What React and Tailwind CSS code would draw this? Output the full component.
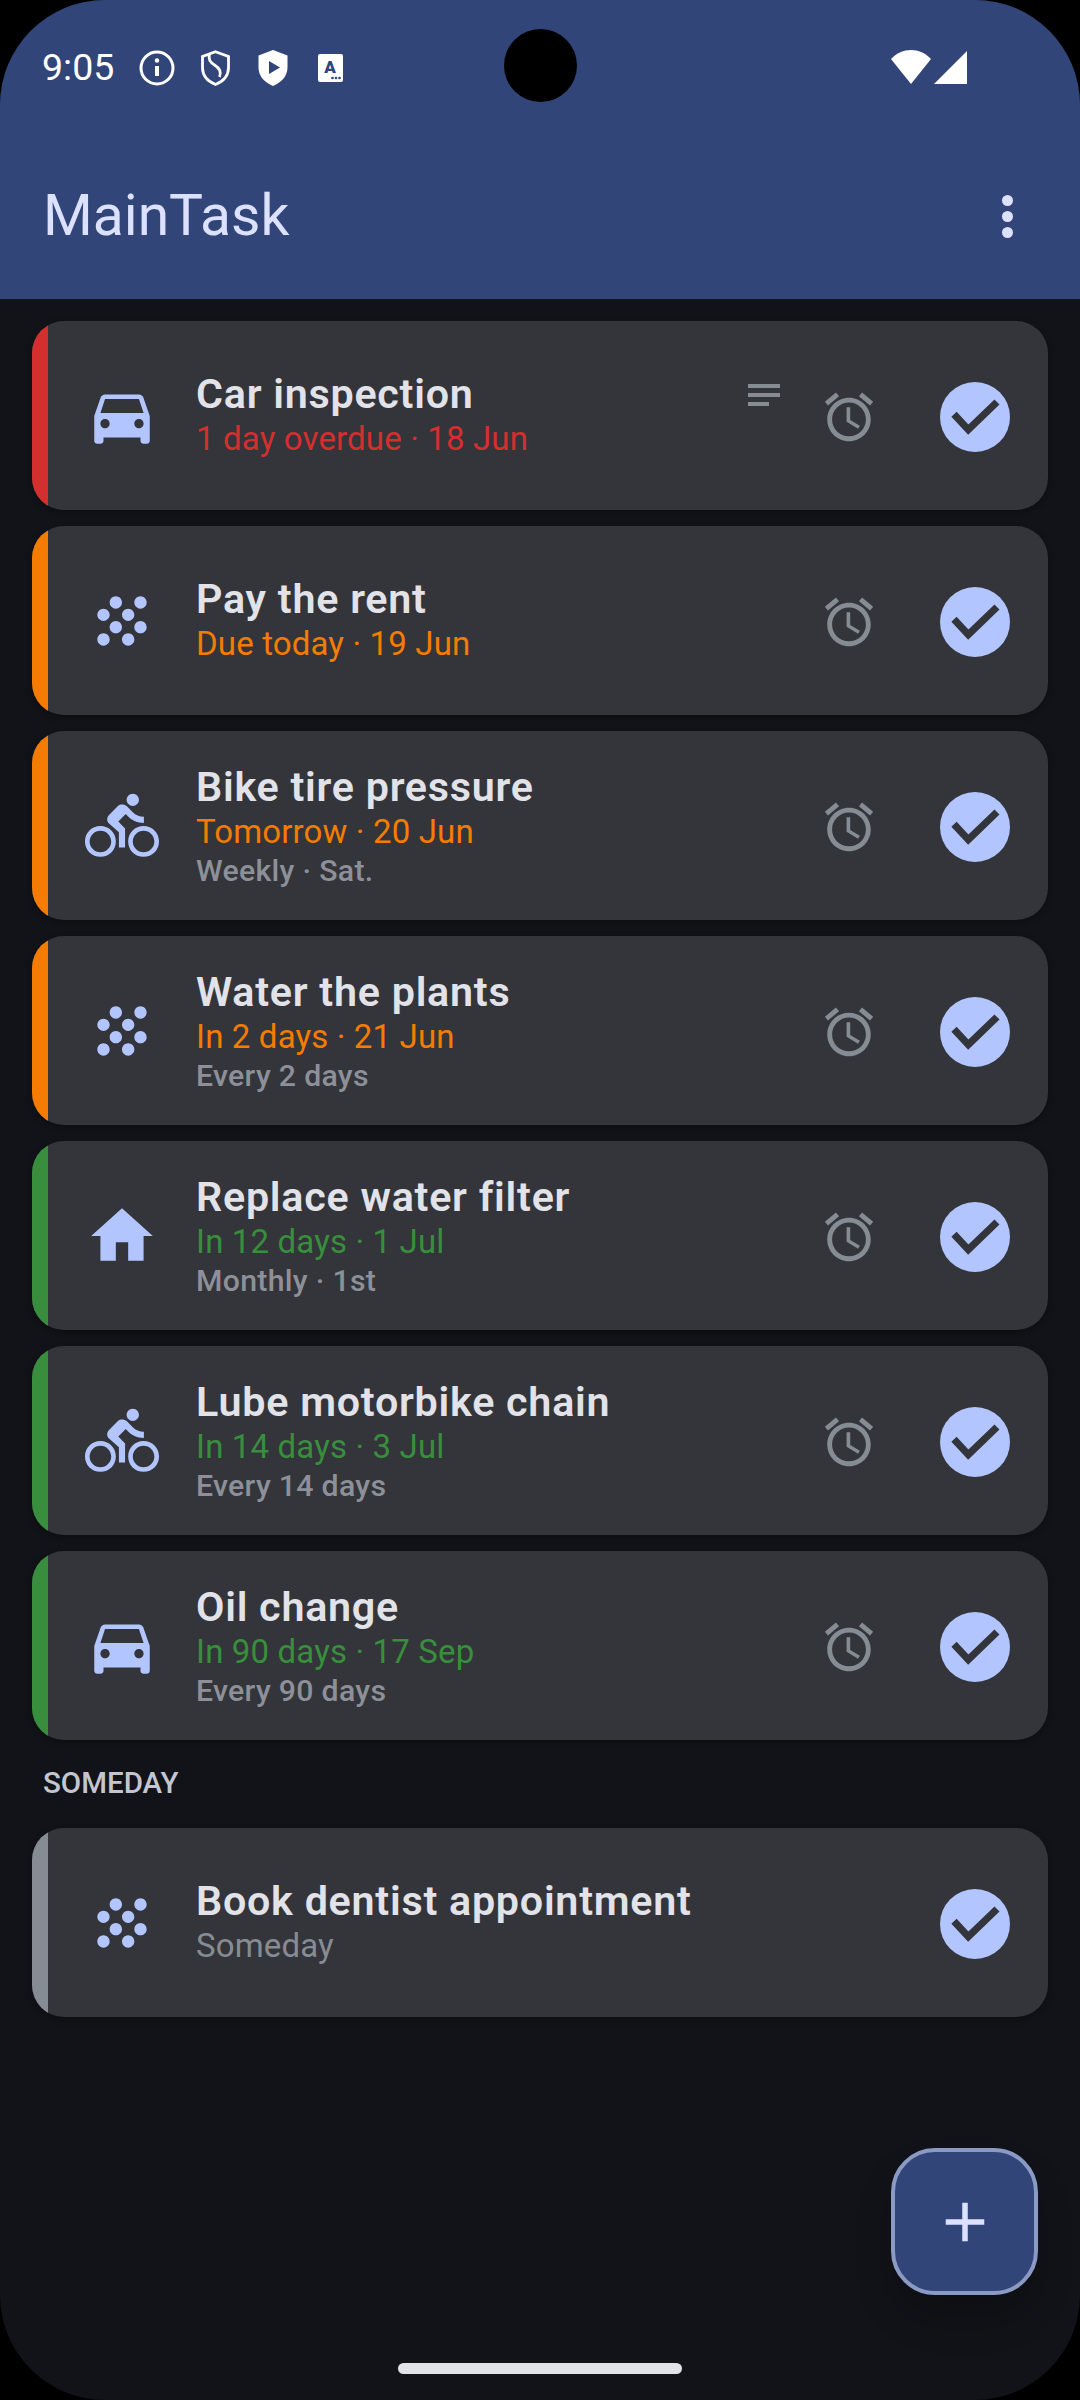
import React from "react";

// material icon paths
const ICONS = {
  car: "M18.92 6.01C18.72 5.42 18.16 5 17.5 5h-11c-.66 0-1.21.42-1.42 1.01L3 12v8c0 .55.45 1 1 1h1c.55 0 1-.45 1-1v-1h12v1c0 .55.45 1 1 1h1c.55 0 1-.45 1-1v-8l-2.08-5.99zM6.5 16c-.83 0-1.5-.67-1.5-1.5S5.67 13 6.5 13s1.5.67 1.5 1.5S7.33 16 6.5 16zm11 0c-.83 0-1.5-.67-1.5-1.5s.67-1.5 1.5-1.5 1.5.67 1.5 1.5-.67 1.5-1.5 1.5zM5 11l1.5-4.5h11L19 11H5z",
  grain: "M10 12c-1.1 0-2 .9-2 2s.9 2 2 2 2-.9 2-2-.9-2-2-2zM6 8c-1.1 0-2 .9-2 2s.9 2 2 2 2-.9 2-2-.9-2-2-2zm0 8c-1.1 0-2 .9-2 2s.9 2 2 2 2-.9 2-2-.9-2-2-2zm12-8c1.1 0 2-.9 2-2s-.9-2-2-2-2 .9-2 2 .9 2 2 2zm-4 8c-1.1 0-2 .9-2 2s.9 2 2 2 2-.9 2-2-.9-2-2-2zm4-4c-1.1 0-2 .9-2 2s.9 2 2 2 2-.9 2-2-.9-2-2-2zm-4-4c-1.1 0-2 .9-2 2s.9 2 2 2 2-.9 2-2-.9-2-2-2zm-4-4c-1.1 0-2 .9-2 2s.9 2 2 2 2-.9 2-2-.9-2-2-2z",
  bike: "M15.5 5.5c1.1 0 2-.9 2-2s-.9-2-2-2-2 .9-2 2 .9 2 2 2zM5 12c-2.8 0-5 2.2-5 5s2.2 5 5 5 5-2.2 5-5-2.2-5-5-5zm0 8.5c-1.9 0-3.5-1.6-3.5-3.5s1.6-3.5 3.5-3.5 3.5 1.6 3.5 3.5-1.6 3.5-3.5 3.5zm5.8-10l2.4-2.4.8.8c1.3 1.3 3 2.1 5.1 2.1V9c-1.5 0-2.7-.6-3.6-1.5l-1.9-1.9c-.5-.4-1-.6-1.6-.6s-1.1.2-1.4.6L7.8 8.4c-.4.4-.6.9-.6 1.4 0 .6.2 1.1.6 1.4L11 14v5h2v-6.2l-2.2-2.3zM19 12c-2.8 0-5 2.2-5 5s2.2 5 5 5 5-2.2 5-5-2.2-5-5-5zm0 8.5c-1.9 0-3.5-1.6-3.5-3.5s1.6-3.5 3.5-3.5 3.5 1.6 3.5 3.5-1.6 3.5-3.5 3.5z",
  home: "M10 20v-6h4v6h5v-8h3L12 3 2 12h3v8z",
  alarm: "M22 5.72l-4.6-3.86-1.29 1.53 4.6 3.86L22 5.72zM7.88 3.39L6.6 1.86 2 5.71l1.29 1.53 4.59-3.85zM12.5 8H11v6l4.75 2.85.75-1.23-4-2.37V8zM12 4c-4.97 0-9 4.03-9 9s4.03 9 9 9 9-4.03 9-9-4.03-9-9-9zm0 16c-3.87 0-7-3.13-7-7s3.13-7 7-7 7 3.13 7 7-3.13 7-7 7z",
  add: "M19 13h-6v6h-2v-6H5v-2h6V5h2v6h6v2z",
};

function Icon({ name, className }) {
  return (
    <svg viewBox="0 0 24 24" fill="currentColor" className={className}>
      <path d={ICONS[name]} />
    </svg>
  );
}

const tasks = [
  { title: "Car inspection", due: "1 day overdue · 18 Jun", icon: "car", stripe: "bg-[#d32f2f]", tone: "text-[#d32f2f]", notes: true },
  { title: "Pay the rent", due: "Due today · 19 Jun", icon: "grain", stripe: "bg-[#f57c00]", tone: "text-[#f57c00]" },
  { title: "Bike tire pressure", due: "Tomorrow · 20 Jun", repeat: "Weekly · Sat.", icon: "bike", stripe: "bg-[#f57c00]", tone: "text-[#f57c00]" },
  { title: "Water the plants", due: "In 2 days · 21 Jun", repeat: "Every 2 days", icon: "grain", stripe: "bg-[#f57c00]", tone: "text-[#f57c00]" },
  { title: "Replace water filter", due: "In 12 days · 1 Jul", repeat: "Monthly · 1st", icon: "home", stripe: "bg-[#388e3c]", tone: "text-[#388e3c]" },
  { title: "Lube motorbike chain", due: "In 14 days · 3 Jul", repeat: "Every 14 days", icon: "bike", stripe: "bg-[#388e3c]", tone: "text-[#388e3c]" },
  { title: "Oil change", due: "In 90 days · 17 Sep", repeat: "Every 90 days", icon: "car", stripe: "bg-[#388e3c]", tone: "text-[#388e3c]" },
];

function TaskCard({ task, noAlarm }) {
  return (
    <div className="flex h-[189px] items-center overflow-hidden rounded-[32px] bg-[#33353a] shadow-[0_2px_6px_rgba(0,0,0,0.3)]">
      <div className={`h-full w-4 shrink-0 ${task.stripe}`} />
      <Icon name={task.icon} className="ml-[37px] h-[74px] w-[74px] shrink-0 text-[#b3c5ff]" />
      <div className={`ml-[37px] min-w-0 flex-1 ${task.repeat ? "pt-[2px]" : "pb-[3px]"}`}>
        <div className="text-[41.25px] font-semibold leading-[49px] tracking-[0.75px] text-[#e2e2e9]">{task.title}</div>
        <div className={`text-[33px] leading-[39px] tracking-[0.15px] ${task.tone}`}>{task.due}</div>
        {task.repeat && (
          <div className="text-[30.25px] font-medium leading-[39px] tracking-[0.3px] text-[#8e9099]">{task.repeat}</div>
        )}
      </div>
      {task.notes && (
        <svg viewBox="0 0 32 22" className="mb-[41px] h-[22px] w-8 shrink-0 text-[#868c94]" fill="currentColor">
          <rect width="32" height="4" />
          <rect y="9" width="32" height="4" />
          <rect y="18" width="21" height="4" />
        </svg>
      )}
      {!noAlarm && <Icon name="alarm" className="ml-[40px] mt-[2px] h-[58px] w-[58px] shrink-0 text-[#868c94]" />}
      <div className="ml-[62px] mr-[38px] mt-[2px] flex h-[70px] w-[70px] shrink-0 items-center justify-center rounded-full bg-[#b3c5ff]">
        <svg viewBox="0 0 70 70" className="h-[70px] w-[70px] text-[#33353a]" fill="none" stroke="currentColor" strokeWidth="7.2">
          <path d="M14 32.300 28.300 47.700 57 20" />
        </svg>
      </div>
    </div>
  );
}

function StatusIcons() {
  return (
    <div className="ml-[25px] flex items-center text-white">
      <svg viewBox="0 0 36 36" className="h-9 w-9" fill="none" stroke="currentColor" strokeWidth="3">
        <circle cx="18" cy="18" r="16" />
        <path d="M18 16v10" strokeWidth="4" />
        <circle cx="18" cy="10.5" r="2.2" fill="currentColor" stroke="none" />
      </svg>
      <svg viewBox="0 0 30 36" className="ml-[25px] h-9 w-[31px]" fill="none" stroke="currentColor" strokeWidth="2.8">
        <path d="M15 1.8 28 6.5v11c0 8-5.500 14-13 17-7.500-3-13-9-13-17v-11z" />
        <path d="M9 4c-1.500 5 0 8 5 11 5 3 7 7 5 12" />
      </svg>
      <svg viewBox="0 0 30 36" className="ml-[27px] h-9 w-[30px]" fill="currentColor">
        <path fillRule="evenodd" d="M15 0 29.500 5.500v12c0 8.500-6 15-14.500 18.500C6.500 32.500.5 26 .5 17.500v-12zM11 11v13l11-6.500z" />
      </svg>
      <svg viewBox="0 0 25 28" className="ml-[30px] h-7 w-[25px]">
        <rect width="25" height="28" rx="2" fill="currentColor" />
        <text x="12" y="19" textAnchor="middle" fontFamily="Roboto, sans-serif" fontWeight="900" fontSize="17" fill="#324578">A</text>
        <circle cx="14.500" cy="24" r="1.300" fill="#324578" />
        <circle cx="18" cy="24" r="1.300" fill="#324578" />
        <circle cx="21.500" cy="24" r="1.300" fill="#324578" />
      </svg>
    </div>
  );
}

export default function App() {
  return (
    <div className="h-[2400px] w-[1080px] bg-black font-['Roboto',sans-serif]">
      <div className="relative flex h-full flex-col overflow-hidden rounded-[105px] bg-[#111318]">
        <header className="h-[299px] shrink-0 bg-[#324578]">
          <div className="flex h-[134px] items-center pl-[42px] pt-[2px]">
            <span className="text-[37.5px] leading-none text-white">9:05</span>
            <StatusIcons />
            <div className="absolute left-[504px] top-[29px] h-[73px] w-[73px] rounded-full bg-black" />
            <div className="ml-auto mr-[113px] flex items-center gap-[3px] pb-[2px] text-white">
              <svg viewBox="0 0 40 34" className="h-[34px] w-10" fill="currentColor">
                <path d="M0 9C11-3 29-3 40 9L20 34z" />
              </svg>
              <svg viewBox="0 0 33 33" className="h-[33px] w-[33px]" fill="currentColor">
                <path d="M33 0v33H0z" />
              </svg>
            </div>
          </div>
          <div className="flex items-center pl-[43px] pr-[67px] pt-[42px]">
            <h1 className="text-[57px] font-normal leading-[80px] text-[#dbe1ff]">MainTask</h1>
            <div className="ml-auto flex flex-col gap-[5px]">
              <span className="h-[11px] w-[11px] rounded-full bg-[#dbe1ff]" />
              <span className="h-[11px] w-[11px] rounded-full bg-[#dbe1ff]" />
              <span className="h-[11px] w-[11px] rounded-full bg-[#dbe1ff]" />
            </div>
          </div>
        </header>

        <main className="flex flex-col px-8 pt-[22px]">
          <div className="flex flex-col gap-4">
            {tasks.map((t) => (
              <TaskCard key={t.title} task={t} />
            ))}
          </div>
          <div className="pl-[11px] pt-[28px] pb-[29px] text-[29.5px] font-medium leading-[31px] text-[#c4c6cf]">SOMEDAY</div>
          <TaskCard
            noAlarm
            task={{ title: "Book dentist appointment", due: "Someday", icon: "grain", stripe: "bg-[#868c94]", tone: "text-[#868c94]" }}
          />
        </main>

        <button className="absolute left-[891px] top-[2148px] flex h-[147px] w-[147px] items-center justify-center rounded-[44px] border-4 border-[#8a9ac4] bg-[#324578] text-[#dbe1ff] shadow-[0_24px_36px_rgba(0,0,0,0.2)]">
          <Icon name="add" className="h-[66px] w-[66px]" />
        </button>
        <div className="absolute bottom-[26px] left-[398px] h-[11px] w-[284px] rounded-full bg-[#e2e2e9]" />
      </div>
    </div>
  );
}
